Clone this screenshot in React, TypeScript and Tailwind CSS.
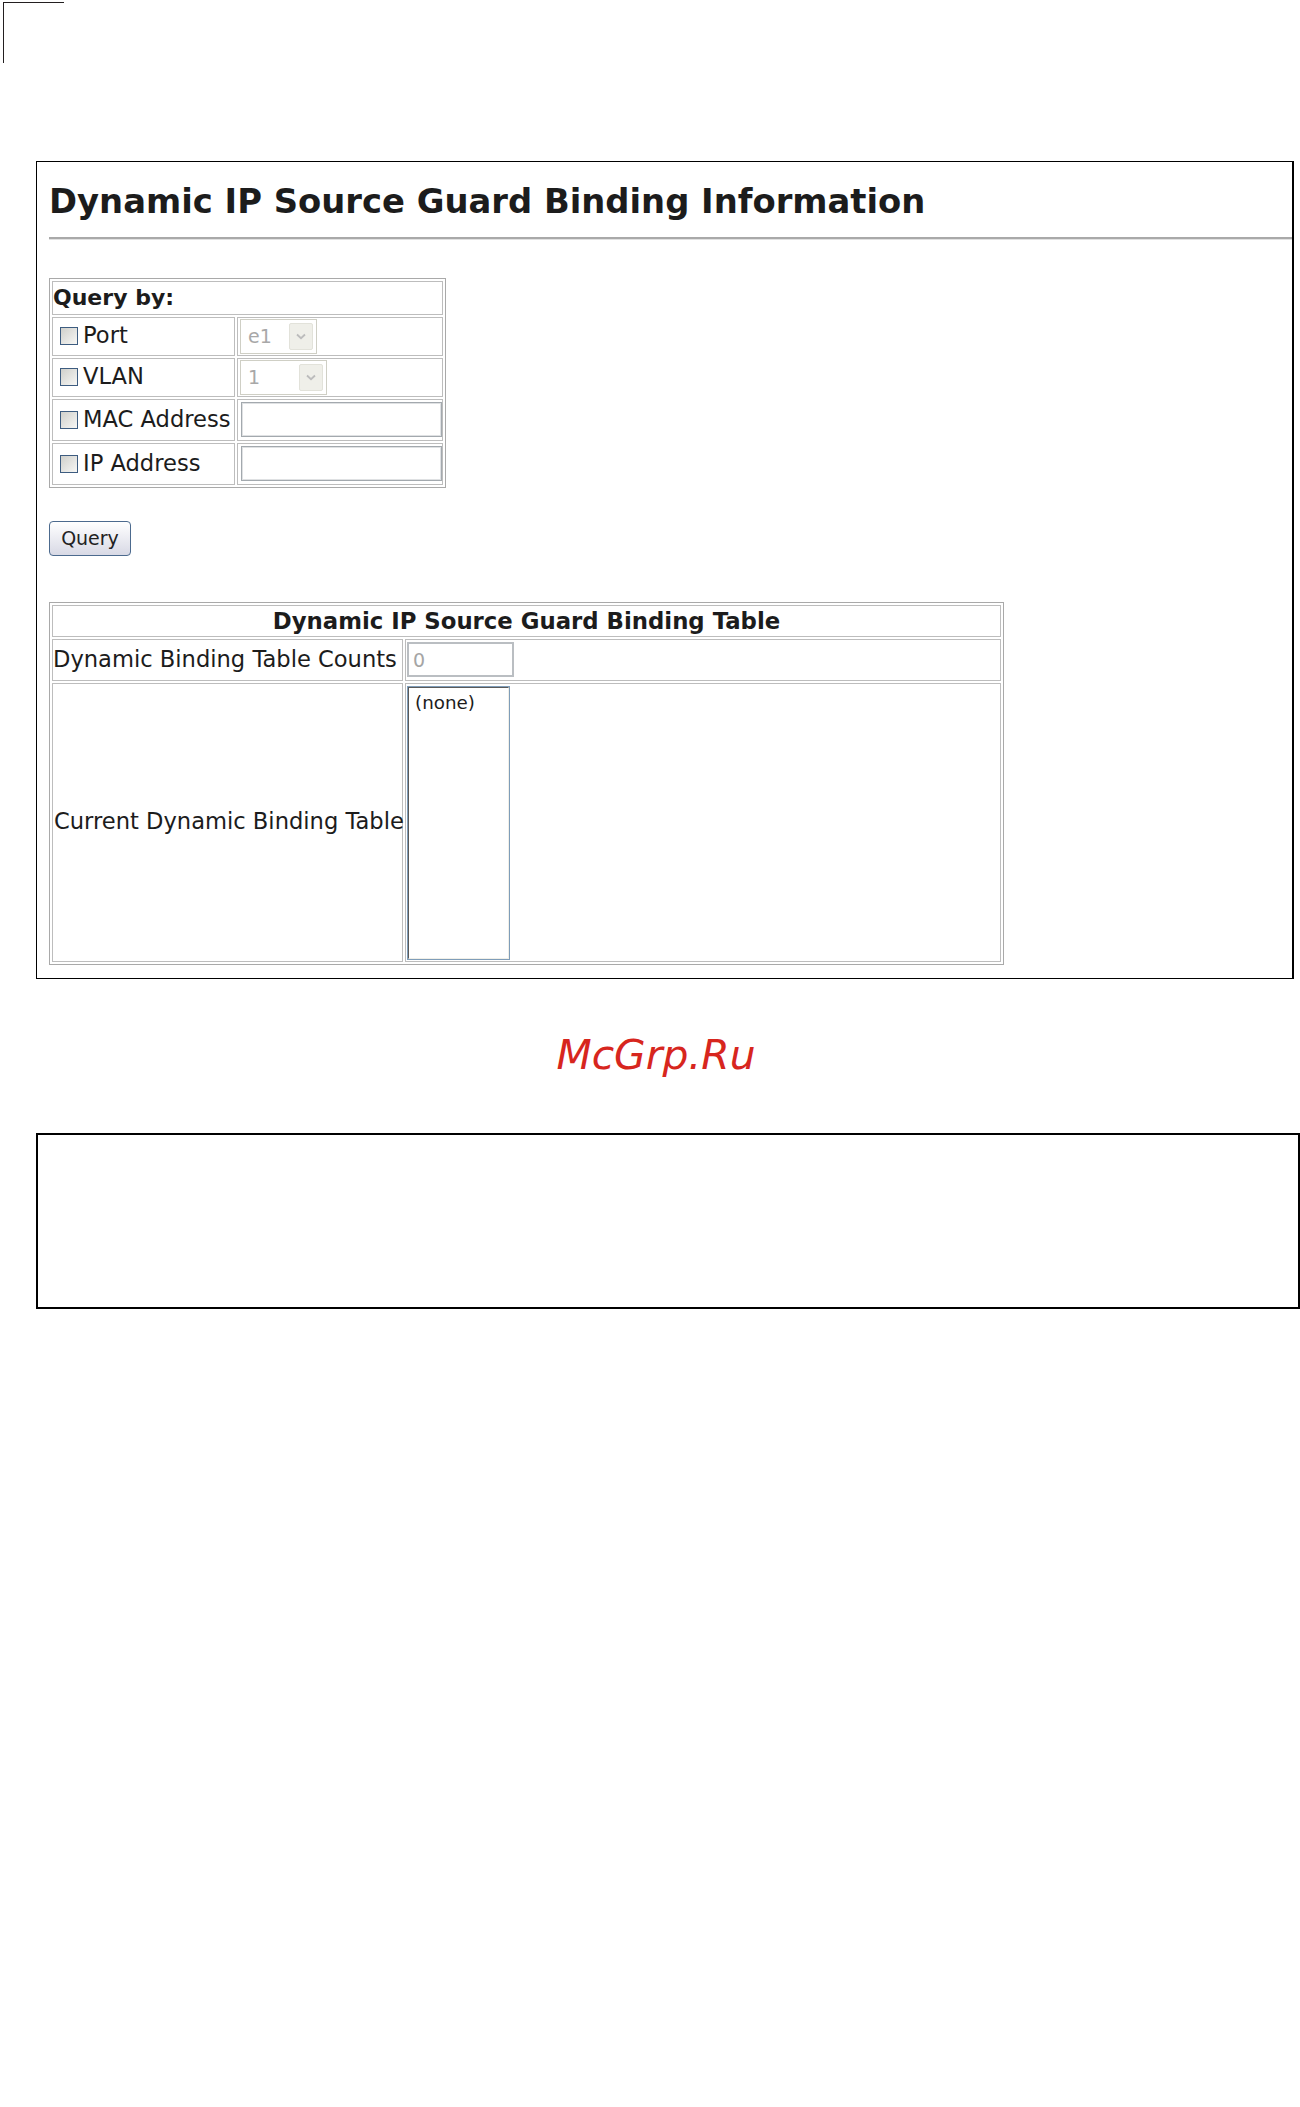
import React from "react";

function CheckBox() {
  return (
    <span className="inline-block h-[18px] w-[18px] shrink-0 border border-[#3d5c80] bg-linear-to-br from-[#d0d0cb] to-[#f7f7f5]" />
  );
}

function Chevron() {
  return (
    <svg width="10" height="7" viewBox="0 0 10 7" fill="none">
      <path d="M1 1.5 L5 5.2 L9 1.5" stroke="#bcbcbc" strokeWidth="1.8" />
    </svg>
  );
}

function FakeSelect({ value, className }: { value: string; className: string }) {
  return (
    <div className={`flex h-[35px] items-stretch border border-[#cfcfc5] bg-white p-[3px] ${className}`}>
      <span className="flex flex-1 items-center pl-[4px] text-[19px] text-[#a8a8a8]">{value}</span>
      <span className="flex w-[24px] items-center justify-center rounded-[2px] border border-[#e2e2da] bg-[#efefe9]">
        <Chevron />
      </span>
    </div>
  );
}

function TextBox({ className }: { className: string }) {
  return (
    <div
      className={`h-[35px] border border-[#a3a9ae] bg-white shadow-[inset_0_0_0_1px_#dfe1e3] ${className}`}
    />
  );
}

function QueryRow({
  label,
  height,
  children,
}: {
  label: string;
  height: string;
  children: React.ReactNode;
}) {
  return (
    <div className={`grid grid-cols-[183px_206px] gap-[2px] ${height}`}>
      <div className="flex items-center gap-[5px] overflow-hidden border border-[#bdbdbd] pl-[7px] text-[22.6px] whitespace-nowrap">
        <CheckBox />
        {label}
      </div>
      <div className="flex items-center border border-[#bdbdbd]">{children}</div>
    </div>
  );
}

export default function App() {
  return (
    <div className="min-h-[2107px] w-full bg-white pt-[2px] font-['DejaVu_Sans',Verdana,sans-serif] text-[#1c1c1c]">
      {/* crop mark */}
      <div className="ml-[3px] h-[61px] w-[61px] border-t border-l border-[#231f20]" />

      {/* main panel */}
      <div className="mt-[98px] ml-[36px] h-[818px] w-[1258px] border-y border-l border-r-2 border-black pt-[23px] pl-[12px]">
        <h1 className="text-[33.8px] leading-none font-bold whitespace-nowrap">
          Dynamic IP Source Guard Binding Information
        </h1>
        <div className="mt-[18px]">
          <div className="h-[2px] bg-[#a9a9a9]" />
          <div className="h-px bg-[#e1e1e1]" />
        </div>

        {/* query table */}
        <div className="mt-[38px] flex w-[397px] flex-col gap-[2px] border border-[#a9a9a9] p-[2px]">
          <div className="flex h-[34px] items-center border border-[#bdbdbd] text-[22px] font-bold">
            Query by:
          </div>
          <QueryRow label="Port" height="h-[39px]">
            <FakeSelect value="e1" className="ml-[2px] w-[77px]" />
          </QueryRow>
          <QueryRow label="VLAN" height="h-[39px]">
            <FakeSelect value="1" className="ml-[2px] w-[87px]" />
          </QueryRow>
          <QueryRow label="MAC Address" height="h-[42px]">
            <TextBox className="ml-[3px] w-[201px]" />
          </QueryRow>
          <QueryRow label="IP Address" height="h-[42px]">
            <TextBox className="ml-[3px] w-[201px]" />
          </QueryRow>
        </div>

        <button className="mt-[33px] flex h-[35px] w-[82px] items-center justify-center rounded-[4px] border border-[#4c6a8e] bg-linear-to-b from-white to-[#d8d9e5] text-[19px] text-[#222]">
          Query
        </button>

        {/* binding table */}
        <div className="mt-[46px] flex w-[955px] flex-col gap-[2px] border border-[#a9a9a9] p-[2px]">
          <div className="flex h-[32px] items-center justify-center border border-[#bdbdbd] text-[22.8px] font-bold whitespace-nowrap">
            Dynamic IP Source Guard Binding Table
          </div>
          <div className="grid h-[42px] grid-cols-[351px_596px] gap-[2px]">
            <div className="flex items-center border border-[#bdbdbd] text-[22.6px] whitespace-nowrap">
              Dynamic Binding Table Counts
            </div>
            <div className="flex items-center border border-[#bdbdbd]">
              <div className="ml-[1px] flex h-[35px] w-[107px] items-center border-2 border-[#babec2] pl-[4px] text-[19px] text-[#a5a5a5]">
                0
              </div>
            </div>
          </div>
          <div className="grid h-[279px] grid-cols-[351px_596px] gap-[2px]">
            <div className="flex items-center border border-[#bdbdbd] pl-[1px] text-[22.6px] whitespace-nowrap">
              Current Dynamic Binding Table
            </div>
            <div className="border border-[#bdbdbd] pt-[2px] pl-[1px]">
              <div className="h-[274px] w-[103px] border border-[#7f9db9]">
                <div className="h-full w-full border-t border-l border-t-[#5a5a5a] border-l-[#5a5a5a] border-r border-b border-r-[#f0efe8] border-b-[#f0efe8] pt-[6px] pl-[6px] text-[18.3px] leading-none">
                  (none)
                </div>
              </div>
            </div>
          </div>
        </div>
      </div>

      {/* watermark */}
      <div className="mt-[56px] flex justify-center pl-[12px]">
        <span className="text-[40.8px] leading-none text-[#d7261e] italic">McGrp.Ru</span>
      </div>

      {/* empty frame */}
      <div className="mt-[57px] ml-[36px] h-[176px] w-[1264px] border-2 border-black" />
    </div>
  );
}
